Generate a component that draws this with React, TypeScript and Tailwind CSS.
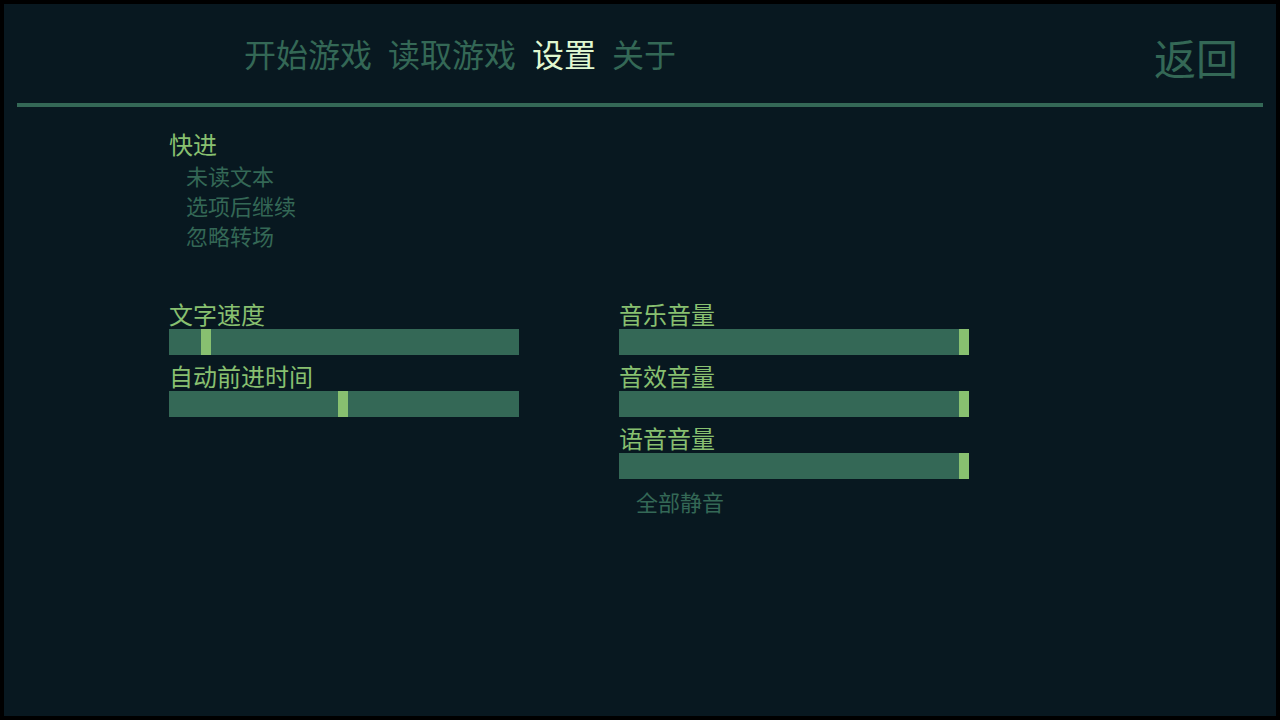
import React from "react";

const font = { fontFamily: '"Noto Sans CJK SC", "Noto Sans", sans-serif' };

function Bar({ pos }: { pos: number }) {
  return (
    <div className="relative h-[26px] w-[350px] bg-[#346856]">
      <div className="absolute top-0 h-[26px] w-[10px] bg-[#88c070]" style={{ left: pos }} />
    </div>
  );
}

function Slider({ label, pos }: { label: string; pos: number }) {
  return (
    <div>
      <div className="pt-[2px] text-[24px] leading-[24px] text-[#88c070]">{label}</div>
      <div className="mt-[3.5px]">
        <Bar pos={pos} />
      </div>
    </div>
  );
}

export default function App() {
  return (
    <div className="h-screen w-screen bg-black p-[4px]" style={font}>
      <div className="h-full w-full bg-[#081820] overflow-hidden">
        <div className="flex h-[99px] items-start justify-between">
          <div className="flex gap-[16px] pl-[240px] pt-[33px] text-[32px] leading-[32px]">
            <span className="text-[#346856]">开始游戏</span>
            <span className="text-[#346856]">读取游戏</span>
            <span className="text-[#e0f8d0]">设置</span>
            <span className="text-[#346856]">关于</span>
          </div>
          <div className="pr-[38px] pt-[32px] text-[42px] leading-[42px] text-[#346856]">返回</div>
        </div>
        <div className="mx-[13px] h-[4px] bg-[#346856]" />
        <div className="pl-[165px] pt-[24.5px]">
          <div className="text-[24px] leading-[24px] text-[#88c070]">快进</div>
          <div className="mt-[4px] pl-[17px] text-[22px] leading-[30px] text-[#346856]">
            <div>未读文本</div>
            <div>选项后继续</div>
            <div>忽略转场</div>
          </div>
          <div className="mt-[50px] flex gap-[100px]">
            <div className="flex flex-col gap-[6.5px]">
              <Slider label="文字速度" pos={32} />
              <Slider label="自动前进时间" pos={169} />
            </div>
            <div className="flex flex-col gap-[6.5px]">
              <Slider label="音乐音量" pos={340} />
              <Slider label="音效音量" pos={340} />
              <Slider label="语音音量" pos={340} />
              <div className="mt-[0.5px] pl-[17px] text-[22px] leading-[30px] text-[#346856]">全部静音</div>
            </div>
          </div>
        </div>
      </div>
    </div>
  );
}
